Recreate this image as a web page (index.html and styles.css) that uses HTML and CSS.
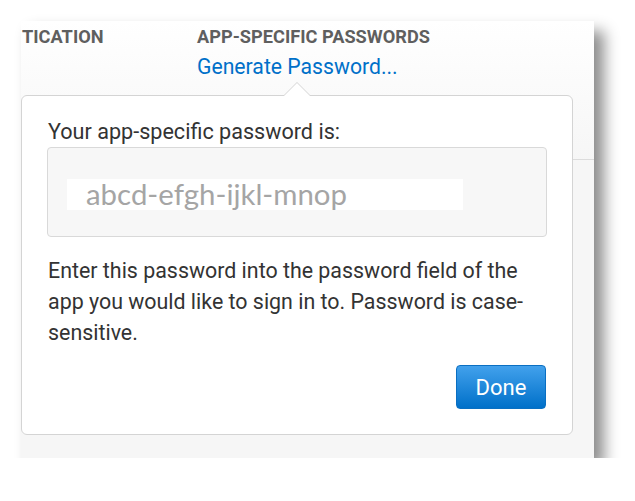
FILE: index.html
```html
<!DOCTYPE html>
<html lang="en">
<head>
    <meta charset="UTF-8">
    <meta name="viewport" content="width=device-width, initial-scale=1.0">
    <title>App-Specific Passwords</title>
    <link rel="stylesheet" href="styles.css">
</head>
<body>
    <div class="window">
        <div class="columns">
            <div class="col col-auth">
                <h3>TICATION</h3>
            </div>
            <div class="col col-app">
                <h3>APP-SPECIFIC PASSWORDS</h3>
                <a href="#" class="generate">Generate Password...</a>
            </div>
        </div>
        <div class="rule"></div>

        <div class="popover">
            <p class="label">Your app-specific password is:</p>
            <div class="pw-box">
                <span class="pw-value">abcd-efgh-ijkl-mnop</span>
            </div>
            <p class="note">Enter this password into the password field of the app you would like to sign in to. Password is case-sensitive.</p>
            <div class="actions">
                <button type="button" class="done">Done</button>
            </div>
        </div>
    </div>
</body>
</html>
```

FILE: styles.css
```css
body {
    margin: 0;
    background-color: #fff;
    font-family: Roboto, "Noto Sans", sans-serif;
}
.window {
    position: relative;
    width: 573px;
    height: 437px;
    margin: 21px 0 0 21px;
    background: linear-gradient(#fff, #f6f6f6 140px, #f6f6f6);
    box-shadow: 10px 10px 14px rgba(0, 0, 0, 0.45);
    overflow: hidden;
}
.columns {
    display: flex;
    padding-top: 6px;
}
.col h3 {
    margin: 0;
    font-size: 18.2px;
    font-weight: 700;
    line-height: 20px;
    color: #5f5f5f;
}
.col-auth {
    width: 175px;
    padding-left: 1px;
}
.col-app {
    display: flex;
    flex-direction: column;
}
.generate {
    margin-top: 8px;
    font-size: 21.2px;
    line-height: 24px;
    color: #0070c9;
    text-decoration: none;
}
.rule {
    margin: 80px 0 0 551px;
    border-top: 1px solid #dcdcdc;
}
.popover {
    position: absolute;
    left: 0;
    top: 74px;
    width: 552px;
    height: 340px;
    padding: 20px 25px 0 25px;
    box-sizing: border-box;
    background-color: #fff;
    border: 1px solid #d4d4d4;
    border-radius: 6px;
}
.popover::before,
.popover::after {
    content: "";
    position: absolute;
    left: 261px;
    width: 0;
    height: 0;
    border: 14px solid transparent;
    border-top: 0;
}
.popover::before {
    top: -14px;
    border-bottom-color: #d4d4d4;
}
.popover::after {
    top: -13px;
    border-bottom-color: #fff;
}
.label {
    margin: 0 0 0 1px;
    font-size: 21.6px;
    line-height: 31px;
    color: #333;
}
.pw-box {
    height: 90px;
    padding: 31px 0 0 19px;
    box-sizing: border-box;
    background-color: #f7f7f7;
    border: 1px solid #d9d9d9;
    border-radius: 4px;
}
.pw-value {
    display: block;
    width: 377px;
    height: 31px;
    padding-left: 19px;
    background-color: #fff;
    font-family: Lato, "Open Sans", sans-serif;
    font-size: 29.4px;
    line-height: 30px;
    color: #a5a5a5;
}
.note {
    margin: 18px 0 0 1px;
    font-size: 21.4px;
    line-height: 31px;
    color: #333;
}
.actions {
    display: flex;
    justify-content: flex-end;
    margin-top: 17px;
}
.done {
    width: 90px;
    height: 44px;
    margin-right: 1px;
    padding: 0;
    font-family: inherit;
    font-size: 22px;
    color: #fff;
    background: linear-gradient(#42a1ec, #0070c9);
    border: 1px solid #0a6fc2;
    border-radius: 4px;
    cursor: pointer;
}
```
